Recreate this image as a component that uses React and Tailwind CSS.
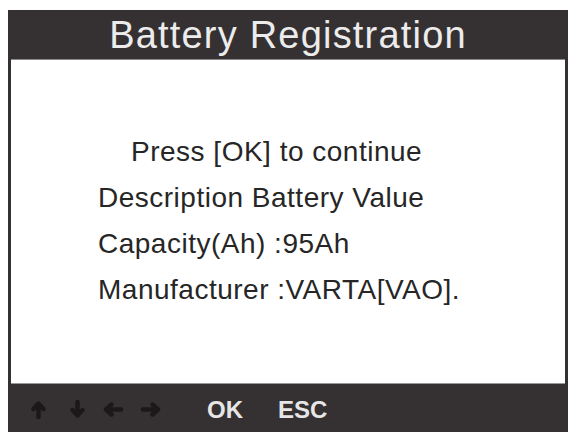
const Arrow = ({ dir }) => {
  // thick scan-tool style arrows, drawn as strokes
  const paths = {
    up: { w: 15, h: 19, d: 'M7.5 17V4 M2.5 9L7.5 3.5 12.5 9' },
    down: { w: 17, h: 19, d: 'M8.5 2v13 M3.5 10l5 5.5 5-5.5' },
    left: { w: 21, h: 17, d: 'M19 8.5H4 M9.5 3.5L4 8.5l5.5 5' },
    right: { w: 21, h: 17, d: 'M2 8.5h15 M11.5 3.5L17 8.5l-5.5 5' },
  };
  const p = paths[dir];
  return (
    <svg width={p.w} height={p.h} viewBox={`0 0 ${p.w} ${p.h}`} fill="none">
      <path d={p.d} stroke="#1b1819" strokeWidth="4.4" strokeLinecap="round" strokeLinejoin="round" />
    </svg>
  );
};

export default function App() {
  return (
    <div className="min-h-[435px] bg-white pl-[8px] pt-[10px]" style={{ fontFamily: '"Liberation Sans", Arial, sans-serif' }}>
      <div className="w-[560px] h-[422px] bg-[#353132] px-[3px] flex flex-col">
        <div className="h-[50px] flex items-center justify-center border-b border-[#8d8a8b]">
          <span className="text-[38px] leading-none tracking-[1.2px] text-[#ececec]">Battery Registration</span>
        </div>

        <div className="flex-1 bg-white pt-[69px] pl-[87px] text-[28px] leading-[46px] tracking-[0.5px] text-[#262626] border-b border-[#9a9798]">
          <p className="pl-[33px]">Press [OK] to continue</p>
          <p>Description Battery Value</p>
          <p>Capacity(Ah) :95Ah</p>
          <p>Manufacturer :VARTA[VAO].</p>
        </div>

        <div className="h-[48px] flex items-center pl-[20px] pt-[3px]">
          <Arrow dir="up" />
          <span className="ml-[23px]"><Arrow dir="down" /></span>
          <span className="ml-[16px]"><Arrow dir="left" /></span>
          <span className="ml-[18px]"><Arrow dir="right" /></span>
          <span className="ml-[45px] text-[24px] leading-none font-bold text-[#e6e6e6]">OK</span>
          <span className="ml-[35px] text-[24px] leading-none font-bold text-[#e6e6e6]">ESC</span>
        </div>
      </div>
    </div>
  );
}
